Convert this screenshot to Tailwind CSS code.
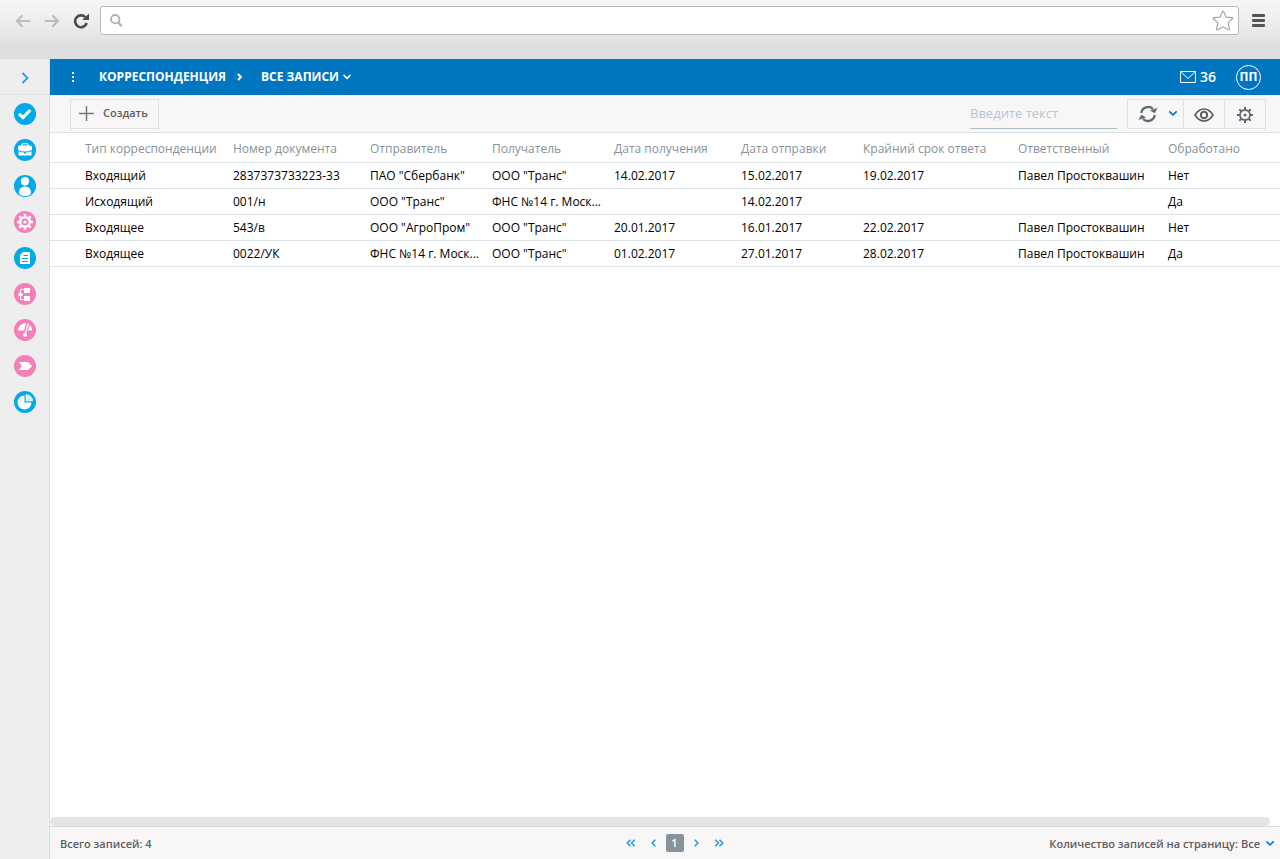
<!DOCTYPE html>
<html lang="ru">
<head>
<meta charset="utf-8">
<meta name="viewport" content="width=device-width, initial-scale=1">
<title>Корреспонденция</title>
<script src="https://cdn.jsdelivr.net/npm/@tailwindcss/browser@4"></script>
</head>
<body class="flex h-screen flex-col bg-white font-['Open_Sans','Noto_Sans',sans-serif] text-xs text-black">

<!-- Browser bar -->
<div class="h-[59px] shrink-0 bg-linear-to-b from-[#f6f7f5] via-[#e9eaeb] via-50% to-[#dfdfdf] to-75%">
  <div class="flex items-center pt-[6px] pr-[15px] pl-[15px]">
    <button class="mr-[13px]" aria-label="Назад">
      <svg class="block" width="16" height="14" viewBox="0 0 16 14" fill="none" stroke="#bcbcbc" stroke-width="2.200" stroke-linecap="round" stroke-linejoin="round"><path d="M7 2 2 7l5 5M3 7h11.500"/></svg>
    </button>
    <button class="mr-[13px]" aria-label="Вперёд">
      <svg class="block" width="16" height="14" viewBox="0 0 16 14" fill="none" stroke="#bcbcbc" stroke-width="2.200" stroke-linecap="round" stroke-linejoin="round"><path d="m9 2 5 5-5 5M13 7H1.500"/></svg>
    </button>
    <button class="mr-[10px]" aria-label="Обновить страницу">
      <svg class="block" width="17" height="16" viewBox="0 0 17 16"><path d="M12.300 4.200A5.900 5.900 0 1 0 13.700 10" fill="none" stroke="#4c4c4c" stroke-width="2.600"/><path d="M16 .5v6.500H9.300z" fill="#4c4c4c"/></svg>
    </button>
    <div class="flex h-[29px] flex-1 items-center rounded-[3px] border border-[#b9bbba] bg-white pr-[4px] pl-[9px]">
      <svg class="shrink-0" width="13" height="13" viewBox="0 0 13 13" fill="none" stroke="#b0b0b0"><circle cx="5.200" cy="5.200" r="4.200" stroke-width="1.800"/><path d="m8.200 8.200 3.400 4" stroke-width="2.200"/></svg>
      <input class="h-full min-w-0 flex-1 px-2 outline-none" type="text" aria-label="Адрес">
      <button aria-label="В закладки">
        <svg class="block" width="22" height="21" viewBox="0 0 22 21" fill="none" stroke="#a5a5a5" stroke-width="1.200" stroke-linejoin="round"><path d="M11 1.200q.6 0 .9.900l1.900 5 6.200.5q1.300.3.400 1.200l-4.400 4.100 1.500 6q0 1.200-1.200.8L11 16.800l-5.300 2.900q-1.200.4-1.200-.8l1.500-6L1.600 8.800q-.9-.9.400-1.200l6.200-.5 1.900-5q.3-.9.900-.9z"/></svg>
      </button>
    </div>
    <button class="ml-[13px]" aria-label="Меню браузера">
      <svg class="block" width="13" height="13" viewBox="0 0 13 13" fill="#555"><rect width="13" height="3" rx="1"/><rect y="5" width="13" height="3" rx="1"/><rect y="10" width="13" height="3" rx="1"/></svg>
    </button>
  </div>
</div>

<div class="flex min-h-0 flex-1">
  <!-- Side navigation -->
  <aside class="w-[50px] shrink-0 border-r border-[#dfdfdf] bg-[#eee]">
    <button class="flex h-9 w-full items-center justify-center border-b border-[#e0e4e6] pt-[2px]" aria-label="Развернуть меню">
      <svg width="8" height="12" viewBox="0 0 8 12" fill="none" stroke="#1ba3e0" stroke-width="1.800"><path d="m1.500 1 5 5-5 5"/></svg>
    </button>
    <nav class="flex flex-col items-center gap-[14px] pt-2">
      <a href="#" aria-label="Задачи"><svg class="block" width="22" height="22" viewBox="0 0 22 22"><circle cx="11" cy="11" r="11" fill="#00a9e8"/><path d="m5 10.800 4 3.700L16.300 7" fill="none" stroke="#fff" stroke-width="3.200"/></svg></a>
      <a href="#" aria-label="Портфель"><svg class="block" width="22" height="22" viewBox="0 0 22 22"><circle cx="11" cy="11" r="11" fill="#00a9e8"/><rect x="8" y="4.600" width="6" height="3" rx="1" fill="none" stroke="#fff" stroke-width="1.200"/><path d="M5.500 6.500h11A1.500 1.500 0 0 1 18 8v3Q11 14 4 11V8a1.500 1.500 0 0 1 1.500-1.500M4.500 12.200q6.500 2.600 13 0v4.300h-13z" fill="#fff"/><rect x="10" y="13" width="2" height="1.500" fill="#00a9e8"/></svg></a>
      <a href="#" aria-label="Контакты"><svg class="block" width="22" height="22" viewBox="0 0 22 22"><circle cx="11" cy="11" r="11" fill="#00a9e8"/><circle cx="11" cy="6.200" r="4.200" fill="#fff"/><path d="M5 17.500c0-3.800 2.500-6 6-6s6 2.200 6 6c0 2.500-3 3.500-6 3.500s-6-1-6-3.500" fill="#fff"/></svg></a>
      <a href="#" aria-label="Настройки"><svg class="block" width="22" height="22" viewBox="0 0 22 22"><circle cx="11" cy="11" r="11" fill="#f57fba"/><g fill="none" stroke="#fff"><circle cx="11" cy="11" r="4.800" stroke-width="2.600"/><path d="M11 3v3M11 16v3M3 11h3M16 11h3M5.300 5.300l2.200 2.200M14.500 14.500l2.200 2.200M5.300 16.700l2.200-2.200M14.500 7.500l2.200-2.200" stroke-width="2.400"/></g><circle cx="11" cy="11" r="1.600" fill="#fff"/></svg></a>
      <a href="#" aria-label="Документы"><svg class="block" width="22" height="22" viewBox="0 0 22 22"><circle cx="11" cy="11" r="11" fill="#00a9e8"/><path d="M9 5h7v12H6V8z" fill="#fff"/><path d="M9.500 8.500H14M8 11.500h6M8 14.500h6" stroke="#00a9e8"/></svg></a>
      <a href="#" aria-label="Структура"><svg class="block" width="22" height="22" viewBox="0 0 22 22"><circle cx="11" cy="11" r="11" fill="#f57fba"/><path d="M10 5h6v5h-6zM10 13h6v5h-6zM6.500 8.800 9.200 11.500 6.500 14.200 3.800 11.500z" fill="#fff"/><path d="M6.500 14v2.500H10M6.500 9V6.500H10" fill="none" stroke="#fff"/></svg></a>
      <a href="#" aria-label="Показатели"><svg class="block" width="22" height="22" viewBox="0 0 22 22"><circle cx="11" cy="11" r="11" fill="#f57fba"/><path d="M4 11.500a7.500 7.500 0 0 1 8-7.300L10 11.500zM15.800 6a7 7 0 0 1 2.400 5.500H14z" fill="#fff"/><path d="M14.300 4.500 11.200 15" stroke="#fff" stroke-width="1.500"/><circle cx="11" cy="16" r="2" fill="#fff"/></svg></a>
      <a href="#" aria-label="Процессы"><svg class="block" width="22" height="22" viewBox="0 0 22 22"><circle cx="11" cy="11" r="11" fill="#f57fba"/><path d="M5 7h9l4.200 4-4.200 4H5l3-4z" fill="#fff"/></svg></a>
      <a href="#" aria-label="Отчёты"><svg class="block" width="22" height="22" viewBox="0 0 22 22"><circle cx="11" cy="11" r="11" fill="#00a9e8"/><path d="M10.500 4.500v7h7a7 7 0 1 1-7-7" fill="#fff"/><path d="M12 3.500a7 7 0 0 1 6.800 6.500H12z" fill="#cfeefa" stroke="#fff" stroke-width=".6"/></svg></a>
    </nav>
  </aside>

  <div class="flex min-w-0 flex-1 flex-col">
    <!-- Title bar -->
    <header class="flex h-9 shrink-0 items-center bg-[#0076c1] pr-[19px] pl-[21px] font-bold text-white">
      <button class="mr-[24px]" aria-label="Ещё"><svg class="block" width="4" height="12" viewBox="0 0 4 12" fill="#fff"><path d="M1 1h2v2H1zM1 5h2v2H1zM1 9h2v2H1z"/></svg></button>
      <a href="#">КОРРЕСПОНДЕНЦИЯ</a>
      <svg class="mr-[18px] ml-[11px]" width="6" height="8" viewBox="0 0 6 8" fill="none" stroke="#fff" stroke-width="2"><path d="m1 1 3 3-3 3"/></svg>
      <button class="flex items-center gap-1">ВСЕ ЗАПИСИ <svg width="8" height="6" viewBox="0 0 8 6" fill="none" stroke="#fff" stroke-width="1.600"><path d="m.6 1 3.400 3.400L7.400 1"/></svg></button>
      <a href="#" class="ml-auto flex items-center gap-1 text-sm font-semibold" aria-label="Сообщения: 36">
        <svg width="16" height="12" viewBox="0 0 16 12" fill="none" stroke="#fff"><path d="M.5.5h15v11H.5zL8 7.500 15.500.5"/></svg>36
      </a>
      <button class="ml-5 flex size-[25px] items-center justify-center rounded-full border border-white">ПП</button>
    </header>

    <!-- Toolbar -->
    <div class="flex h-[38px] shrink-0 items-center border-b border-[#dbe3e7] bg-[#f8f6f7] pr-[14px] pl-5">
      <button class="flex h-[30px] items-center gap-[9px] border border-[#dbe3e7] pr-[10px] pl-[8px] text-[11px] font-semibold text-[#5d5d5d]">
        <svg width="15" height="15" viewBox="0 0 15 15" stroke="#777" stroke-width="1.500"><path d="M7.500 0v15M0 7.500h15"/></svg>Создать
      </button>
      <input type="search" aria-label="Поиск" placeholder="Введите текст" class="ml-auto h-[30px] w-[147px] border-b border-[#b4bfc5] text-[13px] outline-none placeholder:text-[#b9c5cf]">
      <div class="ml-[10px] flex h-[30px] divide-x divide-[#dbe3e7] border border-[#dbe3e7] text-[#5c6b75]">
        <div class="flex w-14 items-center justify-between pr-[5px] pl-[9px]">
          <button aria-label="Обновить"><svg class="block" width="22" height="18" viewBox="0 0 22 18"><path d="M4.300 8A6.900 6.900 0 0 1 16 4M17.700 10A6.900 6.900 0 0 1 6 14" fill="none" stroke="currentColor" stroke-width="2.200"/><path d="M20.500 3 17.800 8.300 13 5.500zM1.500 15 4.200 9.700 9 12.500z" fill="currentColor"/></svg></button>
          <button aria-label="Параметры обновления"><svg class="block" width="10" height="7" viewBox="0 0 10 7" fill="none" stroke="#0076c1" stroke-width="1.700"><path d="m1.300 1.300 3.700 3.500 3.700-3.500"/></svg></button>
        </div>
        <button class="flex w-[41px] items-center justify-center pt-[2px] text-[#5b5b5b]" aria-label="Просмотр"><svg width="20" height="14" viewBox="0 0 20 14" fill="none" stroke="currentColor" stroke-width="1.600"><path d="M1 7c5-8 13-8 18 0-5 8-13 8-18 0z"/><circle cx="10" cy="7" r="3.200" stroke-width="2"/></svg></button>
        <button class="flex w-10 items-center justify-center pt-[2px]" aria-label="Настройка"><svg width="16" height="16" viewBox="0 0 16 16" fill="none" stroke="currentColor"><circle cx="8" cy="8" r="5" stroke-width="1.800"/><path d="M8 0v3M8 13v3M0 8h3M13 8h3M2.300 2.300l2.200 2.200M11.500 11.500l2.200 2.200M2.300 13.700l2.200-2.200M11.500 4.500l2.200-2.200" stroke-width="2"/><circle cx="8" cy="8" r="1.600" fill="currentColor" stroke="none"/></svg></button>
      </div>
    </div>

    <!-- Records -->
    <main class="min-h-0 flex-1 overflow-hidden">
      <table class="w-full table-fixed border-separate border-spacing-0 text-left whitespace-nowrap [&_td]:h-[26px] [&_td]:border-b [&_td]:border-[#dbe3e7] [&_td]:pl-2 [&_td:first-child]:pl-[35px] [&_th]:h-[30px] [&_th]:border-b [&_th]:border-[#dbe3e7] [&_th]:pt-[2px] [&_th]:pl-2 [&_th]:font-normal [&_th]:text-[#87929a] [&_th:first-child]:pl-[35px]">
        <colgroup>
          <col class="w-[175px]"><col class="w-[137px]"><col class="w-[122px]"><col class="w-[122px]"><col class="w-[127px]"><col class="w-[122px]"><col class="w-[155px]"><col class="w-[150px]"><col>
        </colgroup>
        <thead>
          <tr><th>Тип корреспонденции</th><th>Номер документа</th><th>Отправитель</th><th>Получатель</th><th>Дата получения</th><th>Дата отправки</th><th>Крайний срок ответа</th><th>Ответственный</th><th>Обработано</th></tr>
        </thead>
        <tbody>
          <tr><td>Входящий</td><td>2837373733223-33</td><td>ПАО "Сбербанк"</td><td>ООО "Транс"</td><td>14.02.2017</td><td>15.02.2017</td><td>19.02.2017</td><td>Павел Простоквашин</td><td>Нет</td></tr>
          <tr><td>Исходящий</td><td>001/н</td><td>ООО "Транс"</td><td>ФНС №14 г. Моск...</td><td></td><td>14.02.2017</td><td></td><td></td><td>Да</td></tr>
          <tr><td>Входящее</td><td>543/в</td><td>ООО "АгроПром"</td><td>ООО "Транс"</td><td>20.01.2017</td><td>16.01.2017</td><td>22.02.2017</td><td>Павел Простоквашин</td><td>Нет</td></tr>
          <tr><td>Входящее</td><td>0022/УК</td><td>ФНС №14 г. Моск...</td><td>ООО "Транс"</td><td>01.02.2017</td><td>27.01.2017</td><td>28.02.2017</td><td>Павел Простоквашин</td><td>Да</td></tr>
        </tbody>
      </table>
    </main>
    <div class="mr-[10px] h-[9px] shrink-0 rounded-full bg-[#e5e5e5]"></div>

    <!-- Pager -->
    <footer class="grid h-[33px] shrink-0 grid-cols-[1fr_auto_1fr] items-center border-t border-[#d5dadc] bg-[#f8f6f7] pr-[5px] pl-[10px] text-[11px] font-semibold text-[#5d5d5d]">
      <span class="pt-[2px]">Всего записей: 4</span>
      <nav class="flex items-center pl-[14px] text-[#1ba3e0]" aria-label="Страницы">
        <button class="mr-[15px]" aria-label="Первая"><svg class="block" width="10" height="8" viewBox="0 0 10 8" fill="none" stroke="currentColor" stroke-width="1.600"><path d="M4.500.8 1.300 4l3.200 3.200M8.700.8 5.500 4l3.200 3.200"/></svg></button>
        <button class="mr-[10px]" aria-label="Предыдущая"><svg class="block" width="5" height="8" viewBox="0 0 5 8" fill="none" stroke="currentColor" stroke-width="1.600"><path d="M4.300.8 1.100 4l3.200 3.200"/></svg></button>
        <button class="size-[18px] rounded-[2px] bg-[#87929a] text-white" aria-current="page">1</button>
        <button class="ml-[10px]" aria-label="Следующая"><svg class="block" width="5" height="8" viewBox="0 0 5 8" fill="none" stroke="currentColor" stroke-width="1.600"><path d="M.7.8 3.900 4 .7 7.200"/></svg></button>
        <button class="ml-[15px]" aria-label="Последняя"><svg class="block" width="10" height="8" viewBox="0 0 10 8" fill="none" stroke="currentColor" stroke-width="1.600"><path d="M1.300.8 4.500 4 1.300 7.200M5.500.8 8.700 4 5.500 7.200"/></svg></button>
      </nav>
      <div class="flex items-center justify-end">
        <label for="page-size" class="mr-[3px] pt-[2px]">Количество записей на страницу:</label>
        <select id="page-size" class="field-sizing-content appearance-none pt-[2px] outline-none"><option>Все</option></select>
        <svg class="ml-[5px]" width="10" height="7" viewBox="0 0 10 7" fill="none" stroke="#0084cf" stroke-width="1.700"><path d="m1.300 1.300 3.700 3.500 3.700-3.500"/></svg>
      </div>
    </footer>
  </div>
</div>
</body>
</html>
